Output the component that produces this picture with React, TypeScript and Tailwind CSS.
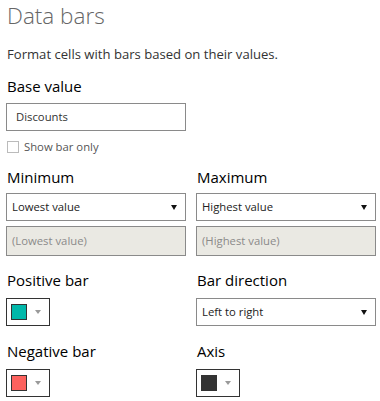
const Caret = () => (
  <svg width="6" height="5" viewBox="0 0 6 5" className="shrink-0">
    <path d="M0 0 L6 0 L3 5 Z" fill="#111" />
  </svg>
);

const Select = ({ value }: { value: string }) => (
  <div className="h-[28px] w-[180px] border border-[#8a8a8a] bg-white flex items-center justify-between pl-[5px] pr-[8px]">
    <span className="text-[11.3px] text-[#222]">{value}</span>
    <Caret />
  </div>
);

const Disabled = ({ value }: { value: string }) => (
  <div className="h-[30px] w-[180px] border border-[#8a8a8a] bg-[#eae9e3] flex items-center pl-[5px]">
    <span className="text-[11.3px] text-[#8a8a8a]">{value}</span>
  </div>
);

const Swatch = ({ color }: { color: string }) => (
  <div className="h-[28px] w-[44px] border border-[#333] bg-white flex items-center pl-[4px] gap-[8px]">
    <div className="w-[16px] h-[16px] border border-[#333]" style={{ backgroundColor: color }} />
    <svg width="6" height="4" viewBox="0 0 6 4">
      <path d="M0 0 L6 0 L3 4 Z" fill="#9a9a9a" />
    </svg>
  </div>
);

const Label = ({ children }: { children: React.ReactNode }) => (
  <div className="text-[15px] text-black leading-[20px] pl-[1px]">{children}</div>
);

export default function App() {
  return (
    <div
      className="w-[380px] h-[401px] bg-white px-[6px] overflow-hidden"
      style={{ fontFamily: '"Open Sans", "Noto Sans", sans-serif' }}
    >
      <div className="text-[22.5px] font-light text-[#666] leading-[31px] pl-[1px]">Data bars</div>

      <div className="mt-[15px] text-[13.1px] text-[#333] leading-[16px] pl-[1px]">
        Format cells with bars based on their values.
      </div>

      <div className="mt-[14px]">
        <Label>Base value</Label>
      </div>
      <div className="mt-[7px] h-[28px] w-[180px] border border-[#8a8a8a] flex items-center pl-[9px]">
        <span className="text-[11.3px] text-[#333]">Discounts</span>
      </div>
      <div className="mt-[9px] flex items-center gap-[5px] pl-[1px]">
        <div className="w-[12px] h-[12px] border border-[#bbb] bg-white" />
        <span className="text-[11.3px] text-[#555] leading-[14px]">Show bar only</span>
      </div>

      <div className="mt-[13px] grid grid-cols-[180px_180px] gap-x-[10px]">
        <div className="flex flex-col">
          <Label>Minimum</Label>
          <div className="mt-[6px] flex flex-col gap-[5px]">
            <Select value="Lowest value" />
            <Disabled value="(Lowest value)" />
          </div>
        </div>
        <div className="flex flex-col">
          <Label>Maximum</Label>
          <div className="mt-[6px] flex flex-col gap-[5px]">
            <Select value="Highest value" />
            <Disabled value="(Highest value)" />
          </div>
        </div>

        <div className="flex flex-col mt-[14px]">
          <Label>Positive bar</Label>
          <div className="mt-[8px]">
            <Swatch color="#01b8aa" />
          </div>
        </div>
        <div className="flex flex-col mt-[14px]">
          <Label>Bar direction</Label>
          <div className="mt-[8px]">
            <Select value="Left to right" />
          </div>
        </div>

        <div className="flex flex-col mt-[15px]">
          <Label>Negative bar</Label>
          <div className="mt-[8px]">
            <Swatch color="#fd625e" />
          </div>
        </div>
        <div className="flex flex-col mt-[15px]">
          <Label>Axis</Label>
          <div className="mt-[8px]">
            <Swatch color="#333333" />
          </div>
        </div>
      </div>
    </div>
  );
}
